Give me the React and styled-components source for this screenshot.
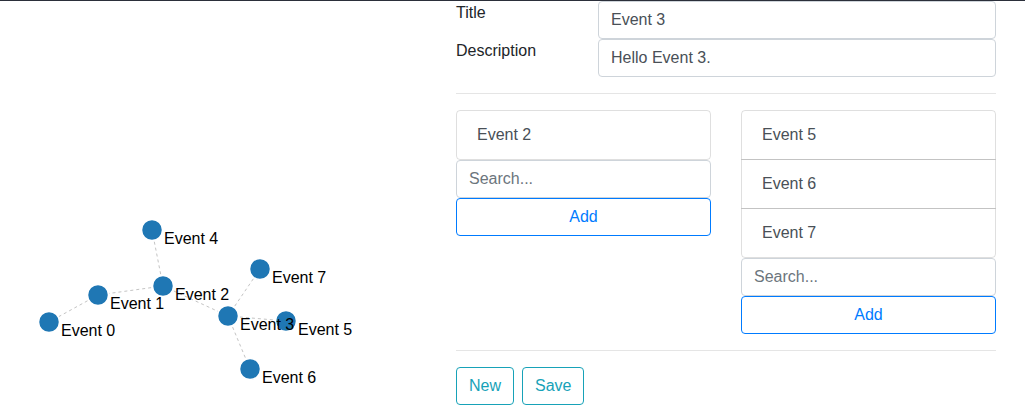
import React from 'react';
import styled, { createGlobalStyle } from 'styled-components';

const GlobalStyle = createGlobalStyle`
  body {
    margin: 0;
    font-family: "Liberation Sans", Arial, sans-serif;
    font-size: 16px;
    line-height: 1.5;
    color: #212529;
    background: #fff;
  }
`;

const nodes = [
  { id: 0, x: 49, y: 322 },
  { id: 1, x: 98, y: 295 },
  { id: 2, x: 163, y: 286 },
  { id: 3, x: 228, y: 316 },
  { id: 4, x: 152, y: 230 },
  { id: 5, x: 286, y: 321 },
  { id: 6, x: 250, y: 369 },
  { id: 7, x: 260, y: 269 },
];

const links = [
  [4, 2],
  [2, 1],
  [1, 0],
  [2, 3],
  [3, 7],
  [3, 5],
  [3, 6],
];

const Graph = () => (
  <GraphSvg width='456' height='408'>
    {links.map(([a, b]) => (
      <Link
        key={`${a}-${b}`}
        x1={nodes[a].x}
        y1={nodes[a].y}
        x2={nodes[b].x}
        y2={nodes[b].y}
      />
    ))}
    {nodes.map((n) => (
      <Node key={n.id} cx={n.x} cy={n.y} r='10.5' />
    ))}
    {nodes.map((n) => (
      <NodeLabel key={n.id} x={n.x + 12} y={n.y + 14}>
        Event {n.id}
      </NodeLabel>
    ))}
  </GraphSvg>
);

const App = () => {
  return (
    <Page>
      <GlobalStyle />
      <Graph />
      <Editor>
        <FormRow>
          <Label>Title</Label>
          <Input defaultValue='Event 3' />
        </FormRow>
        <FormRow>
          <Label>Description</Label>
          <Input defaultValue='Hello Event 3.' />
        </FormRow>
        <Divider />
        <Lists>
          <div>
            <ListGroup>
              <ListItem>Event 2</ListItem>
            </ListGroup>
            <Input placeholder='Search...' />
            <AddButton>Add</AddButton>
          </div>
          <div>
            <ListGroup>
              <ListItem>Event 5</ListItem>
              <ListItem>Event 6</ListItem>
              <ListItem>Event 7</ListItem>
            </ListGroup>
            <Input placeholder='Search...' />
            <AddButton>Add</AddButton>
          </div>
        </Lists>
        <Divider />
        <Actions>
          <ActionButton>New</ActionButton>
          <ActionButton>Save</ActionButton>
        </Actions>
      </Editor>
    </Page>
  );
};

export default App;

const Page = styled.div`
  display: grid;
  grid-template-columns: 456px 540px;
  align-items: start;
  border-top: 1px solid #2b2f3a;
  min-height: 419px;
`;

const GraphSvg = styled.svg`
  display: block;
  margin-top: -1px;
`;

const Link = styled.line`
  stroke: #c4c4c4;
  stroke-width: 1;
  stroke-dasharray: 3 3;
`;

const Node = styled.circle`
  fill: #1f77b4;
  stroke: #fff;
  stroke-width: 1.5;
`;

const NodeLabel = styled.text`
  font-family: "Liberation Sans", Arial, sans-serif;
  font-size: 16px;
  fill: #000;
`;

const Editor = styled.div`
  display: flex;
  flex-direction: column;
`;

const FormRow = styled.div`
  display: grid;
  grid-template-columns: 142px 1fr;
`;

const Label = styled.label`
  line-height: 24px;
`;

const Input = styled.input`
  display: block;
  box-sizing: border-box;
  width: 100%;
  height: 38px;
  margin: 0;
  padding: 6px 12px;
  border: 1px solid #ced4da;
  border-radius: 4px;
  font-family: inherit;
  font-size: 16px;
  line-height: 24px;
  color: #495057;
  background: #fff;
  outline: none;

  &::placeholder {
    color: #6c757d;
  }
`;

const Divider = styled.hr`
  margin: 16px 0;
  border: 0;
  border-top: 1px solid rgba(0, 0, 0, 0.1);
`;

const Lists = styled.div`
  display: grid;
  grid-template-columns: 1fr 1fr;
  column-gap: 30px;
  align-items: start;
`;

const ListGroup = styled.div`
  display: flex;
  flex-direction: column;
`;

const ListItem = styled.div`
  padding: 12px 20px;
  border: 1px solid rgba(0, 0, 0, 0.125);
  line-height: 24px;
  color: #495057;

  & + & {
    margin-top: -1px;
  }
  &:first-child {
    border-top-left-radius: 4px;
    border-top-right-radius: 4px;
  }
  &:last-child {
    border-bottom-left-radius: 4px;
    border-bottom-right-radius: 4px;
  }
`;

const AddButton = styled.button`
  display: block;
  box-sizing: border-box;
  width: 100%;
  height: 38px;
  padding: 6px 12px;
  border: 1px solid #007bff;
  border-radius: 4px;
  background: transparent;
  color: #007bff;
  font-family: inherit;
  font-size: 16px;
  line-height: 24px;
  cursor: pointer;
`;

const Actions = styled.div`
  display: flex;
  gap: 8px;
`;

const ActionButton = styled.button`
  box-sizing: border-box;
  height: 38px;
  padding: 6px 12px;
  border: 1px solid #17a2b8;
  border-radius: 4px;
  background: transparent;
  color: #17a2b8;
  font-family: inherit;
  font-size: 16px;
  line-height: 24px;
  cursor: pointer;
`;
